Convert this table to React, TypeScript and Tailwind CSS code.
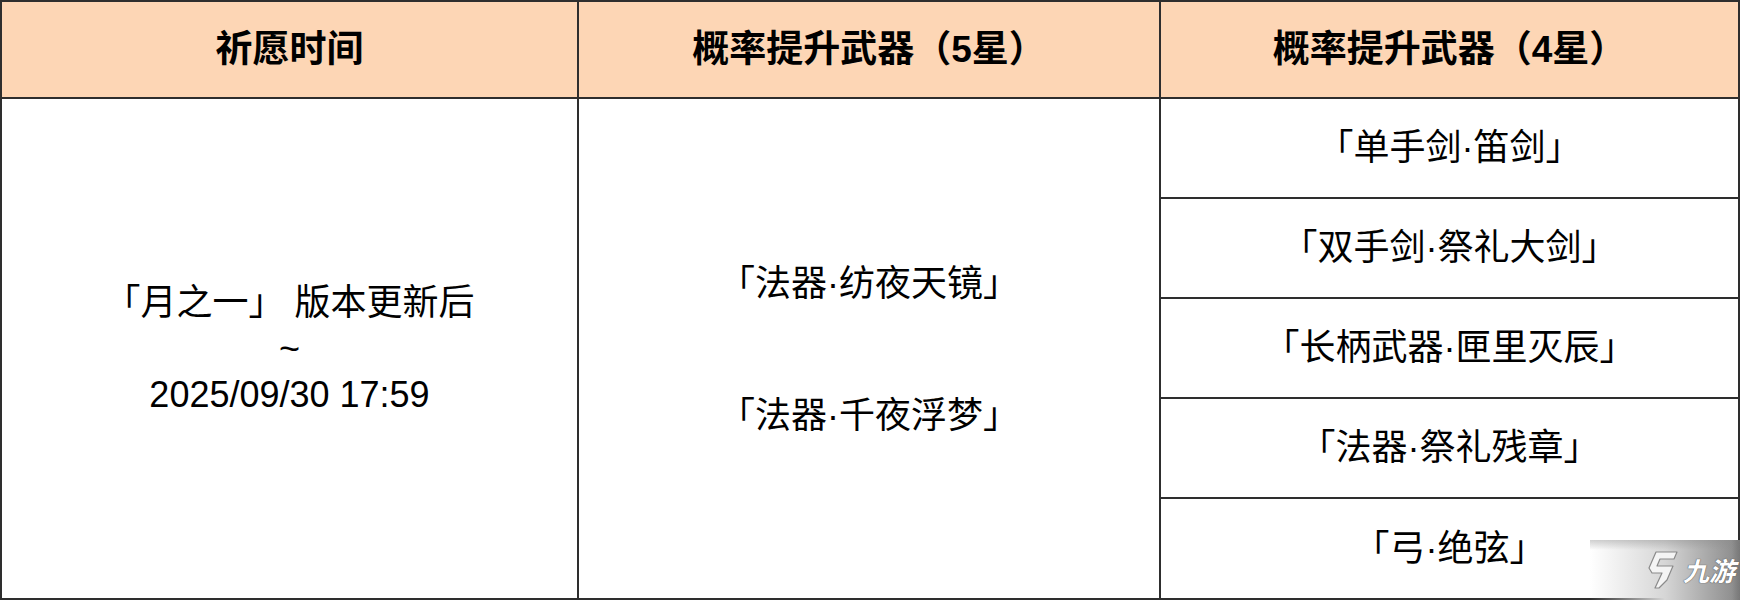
import React from "react";

const font = { fontFamily: '"Liberation Sans", "Noto Sans CJK SC", sans-serif' };

const rows4 = ["「单手剑·笛剑」", "「双手剑·祭礼大剑」", "「长柄武器·匣里灭辰」", "「法器·祭礼残章」", "「弓·绝弦」"];

export default function App() {
  return (
    <div className="relative w-[1740px] h-[600px] bg-white text-black overflow-hidden" style={font}>
      <div className="w-full h-full border-2 border-[#2e2e2e] flex flex-col">
        <div className="flex h-[97px] shrink-0 border-b-2 border-[#2e2e2e] bg-[#fdd6b5] text-[37px] font-bold">
          <div className="w-[577px] shrink-0 border-r-2 border-[#2e2e2e] flex items-center justify-center">祈愿时间</div>
          <div className="w-[582px] shrink-0 border-r-2 border-[#2e2e2e] flex items-center justify-center">概率提升武器（5星）</div>
          <div className="flex-1 flex items-center justify-center">概率提升武器（4星）</div>
        </div>
        <div className="flex flex-1 text-[36px]">
          <div className="w-[577px] shrink-0 border-r-2 border-[#2e2e2e] flex flex-col items-center justify-center leading-[46px] text-center">
            <div>「月之一」 版本更新后</div>
            <div>~</div>
            <div>2025/09/30 17:59</div>
          </div>
          <div className="w-[582px] shrink-0 border-r-2 border-[#2e2e2e] flex flex-col items-center justify-center gap-[86px] leading-[46px] text-center pt-[2px]">
            <div>「法器·纺夜天镜」</div>
            <div>「法器·千夜浮梦」</div>
          </div>
          <div className="flex-1 flex flex-col">
            {rows4.map((r, i) => (
              <div
                key={r}
                className={
                  i < rows4.length - 1
                    ? "h-[100px] shrink-0 border-b-2 border-[#2e2e2e] flex items-center justify-center"
                    : "flex-1 flex items-center justify-center"
                }
              >
                {r}
              </div>
            ))}
          </div>
        </div>
      </div>
      <div className="absolute right-0 bottom-0 w-[150px] h-[60px] bg-gradient-to-r from-white/0 via-[#d6d6d6] to-[#888888] flex items-center justify-end pr-[5px] gap-[4px]">
        <div className="absolute inset-x-0 top-0 h-[10px] bg-gradient-to-b from-[#8a8a8a]/40 to-transparent" />
        <div className="absolute right-0 inset-y-0 w-[8px] bg-gradient-to-r from-transparent to-[#6e6e6e]/60" />
        <svg width="34" height="42" viewBox="0 0 34 42" className="relative">
          <path
            d="M11 3 L32 3 L29 10 L15 10 L12 17 L28 17 L22 31 L14 39 L10 39 L17 24 L7 24 L4 19 Z"
            fill="#f4f4f4"
            stroke="#8a8a8a"
            strokeWidth="1.2"
            strokeLinejoin="round"
          />
        </svg>
        <span
          className="relative italic font-bold text-[26px] text-white leading-none"
          style={{ fontFamily: '"Noto Sans CJK SC", sans-serif', textShadow: "0 0 1px #555, 0 0 1px #555" }}
        >
          九游
        </span>
      </div>
    </div>
  );
}
